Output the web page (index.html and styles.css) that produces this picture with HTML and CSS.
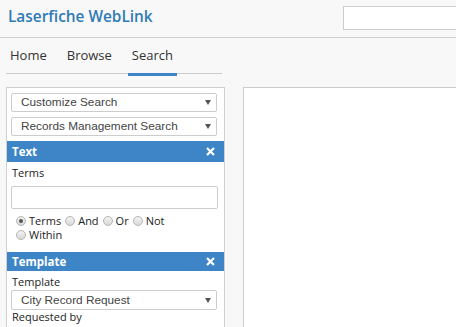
FILE: index.html
```html
<!DOCTYPE html>
<html>
<head>
<meta charset="utf-8">
<link rel="stylesheet" href="styles.css">
</head>
<body>
<header class="topbar">
  <div class="logo">Laserfiche WebLink</div>
  <input class="quick-search" type="text">
</header>
<main class="main">
  <div class="left-col">
    <nav class="nav">
      <a class="nav-item">Home</a>
      <a class="nav-item">Browse</a>
      <a class="nav-item active">Search</a>
    </nav>
    <div class="panel">
      <div class="top-selects">
        <div class="dropdown">Customize Search<span class="caret"></span></div>
        <div class="dropdown">Records Management Search<span class="caret"></span></div>
      </div>
      <section class="section">
        <div class="sec-head sec-head-text">Text<svg class="close" viewBox="0 0 9 9" width="9" height="9"><path d="M1 1 L8 8 M8 1 L1 8" stroke="#fff" stroke-width="2.2" stroke-linecap="butt"/></svg></div>
        <div class="sec-body">
          <div class="label">Terms</div>
          <div class="text-input"></div>
          <div class="radios">
            <span class="opt"><span class="radio checked"></span>Terms</span>
            <span class="opt"><span class="radio"></span>And</span>
            <span class="opt"><span class="radio"></span>Or</span>
            <span class="opt"><span class="radio"></span>Not</span>
            <span class="opt"><span class="radio"></span>Within</span>
          </div>
        </div>
      </section>
      <section class="section">
        <div class="sec-head sec-head-tpl">Template<svg class="close" viewBox="0 0 9 9" width="9" height="9"><path d="M1 1 L8 8 M8 1 L1 8" stroke="#fff" stroke-width="2.2" stroke-linecap="butt"/></svg></div>
        <div class="sec-body sec-body-tpl">
          <div class="label">Template</div>
          <div class="dropdown dropdown-tpl">City Record Request<span class="caret"></span></div>
          <div class="label">Requested by</div>
        </div>
      </section>
    </div>
  </div>
  <div class="content-panel"></div>
</main>
</body>
</html>
```

FILE: styles.css
```css
html, body {
  margin: 0;
  padding: 0;
  background: #f8f8f8;
  overflow: hidden;
  height: 327px;
}

.topbar {
  height: 37px;
  border-bottom: 1px solid #cfcfcf;
  display: flex;
  align-items: flex-start;
  justify-content: space-between;
  box-sizing: content-box;
}

.logo {
  font-family: "Open Sans", sans-serif;
  font-weight: 600;
  font-size: 15.4px;
  color: #2f7bb6;
  line-height: 20px;
  padding: 7px 0 0 8px;
}

.quick-search {
  margin: 6px -10px 0 0;
  width: 123px;
  height: 24px;
  box-sizing: border-box;
  border: 1px solid #cccccc;
  background: #fff;
  padding: 0;
  outline: none;
}

.main {
  display: flex;
  padding-left: 6px;
  gap: 18px;
  align-items: flex-start;
}

.left-col {
  width: 219px;
  flex: none;
}

.nav {
  width: 216px;
  height: 35px;
  border-bottom: 1px solid #cccccc;
  display: flex;
  gap: 12px;
  font-family: "Open Sans", sans-serif;
  font-size: 13px;
  line-height: 18px;
  color: #333;
}

.nav-item {
  padding: 8px 4px 0 4px;
  height: 27px;
  border-bottom: 3px solid transparent;
}

.nav-item.active {
  border-bottom-color: #3d85c6;
}

.panel {
  margin-top: 13px;
  background: #fff;
  border: 1px solid #d0d0d0;
  border-bottom: none;
  height: 240px;
  overflow: hidden;
  font-family: "Open Sans", sans-serif;
  font-size: 11px;
  color: #222;
}

.top-selects {
  display: flex;
  flex-direction: column;
  gap: 5px;
  padding: 5px 7px 5px 4px;
}

.dropdown {
  position: relative;
  height: 19px;
  box-sizing: border-box;
  border: 1px solid #cccccc;
  border-radius: 2px;
  background: #fff;
  font-family: "Liberation Sans", Arial, sans-serif;
  font-size: 11.8px;
  line-height: 17px;
  color: #444;
  padding-left: 9px;
}

.caret {
  position: absolute;
  right: 5px;
  top: 6px;
  width: 0;
  height: 0;
  border-left: 3px solid transparent;
  border-right: 3px solid transparent;
  border-top: 5px solid #555;
}

.sec-head {
  background: #3d85c6;
  color: #fff;
  font-weight: 700;
  font-size: 11.5px;
  display: flex;
  align-items: center;
  justify-content: space-between;
  padding: 0 9px 0 5px;
}

.sec-head-text {
  height: 21px;
}

.sec-head-tpl {
  height: 19px;
}

.sec-body {
  padding: 4px 6px 10px 4px;
}

.sec-body-tpl {
  padding-bottom: 0;
}

.label {
  line-height: 14px;
  padding-left: 1px;
}

.text-input {
  margin-top: 6px;
  height: 23px;
  box-sizing: border-box;
  border: 1px solid #cccccc;
  border-radius: 2px;
  background: #fff;
}

.radios {
  margin-top: 5px;
  display: flex;
  flex-wrap: wrap;
  column-gap: 4px;
  line-height: 14px;
  padding-left: 5px;
  width: 160px;
}

.opt {
  display: inline-flex;
  align-items: center;
}

.radio {
  width: 10px;
  height: 10px;
  box-sizing: border-box;
  border-radius: 50%;
  border: 1px solid #b5b5b5;
  background: linear-gradient(#f2f2f2, #d9d9d9);
  margin-right: 3px;
  position: relative;
}

.radio.checked::after {
  content: "";
  position: absolute;
  left: 2px;
  top: 2px;
  width: 4px;
  height: 4px;
  border-radius: 50%;
  background: #555;
}

.dropdown-tpl {
  margin-top: 1px;
  height: 20px;
  line-height: 18px;
  margin-right: 1px;
}

.dropdown-tpl .caret {
  top: 7px;
}

.content-panel {
  flex: 1;
  margin-top: 49px;
  height: 240px;
  background: #fff;
  border: 1px solid #cccccc;
  border-right: none;
  border-bottom: none;
}
```
